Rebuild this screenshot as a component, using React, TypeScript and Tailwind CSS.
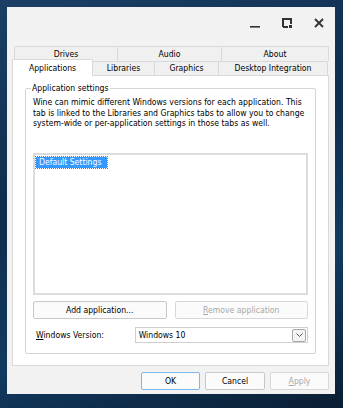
import React from 'react';

function Tab({ label, w, selected }: { label: string; w: string; selected?: boolean }) {
  if (selected) {
    return (
      <div
        className={`${w} relative z-10 -mt-[2px] h-[17px] -mb-[1px] bg-white border border-b-0 border-[#d9d9d9] rounded-t-[2px] flex items-center justify-center text-black`}
      >
        {label}
      </div>
    );
  }
  return (
    <div
      className={`${w} h-full bg-[#f0f0f0] border border-b-0 border-[#d9d9d9] -ml-px first:ml-0 rounded-t-[2px] flex items-center justify-center text-black`}
    >
      {label}
    </div>
  );
}

function TitleButtons() {
  return (
    <div className="h-[39px] flex justify-end items-start pt-[10px] pr-[11px] gap-[22px]">
      <svg width="10" height="10" viewBox="0 0 10 10" className="mt-[1px]">
        <rect x="0" y="8" width="10" height="1.6" fill="#333" />
      </svg>
      <svg width="10" height="10" viewBox="0 0 10 10" className="mt-[1px]">
        <path d="M1 9 V1 H9 V6" fill="none" stroke="#333" strokeWidth="2" />
        <path d="M1 9 H6" fill="none" stroke="#333" strokeWidth="2" />
        <rect x="7" y="7" width="3" height="3" fill="#333" />
      </svg>
      <svg width="10" height="10" viewBox="0 0 10 10" className="mt-[1px]">
        <path d="M1 1 L9 9 M9 1 L1 9" stroke="#333" strokeWidth="1.8" />
      </svg>
    </div>
  );
}

export default function App() {
  return (
    <div className="w-[343px] h-[408px] overflow-hidden bg-[linear-gradient(160deg,#1b3f66_0%,#0f2d4d_40%,#123a60_70%,#0a1e33_100%)] pt-[7px] pl-[7px] [font-family:'DejaVu_Sans_Condensed','Liberation_Sans',Arial,sans-serif] [font-stretch:condensed] text-[8.6px] text-black">
      <div className="w-[328px] h-[387px] bg-[#f2f2f2] flex flex-col">
        <TitleButtons />

        <div className="pl-[7px] pr-[6px] h-[15px] flex">
          <Tab label="Drives" w="w-[104px]" />
          <Tab label="Audio" w="w-[105px]" />
          <Tab label="About" w="w-[108px]" />
        </div>

        <div className="pl-[5px] pr-[6px] h-[14px] flex items-end">
          <Tab label="Applications" w="w-[81px]" selected />
          <Tab label="Libraries" w="w-[63px]" />
          <Tab label="Graphics" w="w-[65px]" />
          <Tab label="Desktop Integration" w="w-[110px]" />
        </div>

        <div className="mx-[5px] mr-[6px] h-[291px] bg-white border border-[#d9d9d9] px-[12px] pt-[12px]">
          <div className="relative h-[266px] border border-[#d5d5d5] rounded-[2px] px-[7px] pt-[8px]">
            <span className="absolute -top-[7px] left-[5px] bg-white px-px leading-[12px]">Application settings</span>
            <p className="leading-[10.7px] whitespace-nowrap">
              Wine can mimic different Windows versions for each application. This
              <br />
              tab is linked to the Libraries and Graphics tabs to allow you to change
              <br />
              system-wide or per-application settings in those tabs as well.
            </p>
            <div className="mt-[24px] h-[142px] border-2 border-[#dcdcdc] bg-white p-px">
              <span className="inline-block bg-[#3399ff] text-white leading-[11px] px-[3px] pr-[6px] outline outline-1 outline-dotted outline-[#777]">
                Default Settings
              </span>
            </div>
            <div className="mt-[6px] flex gap-[8px]">
              <button className="w-[134px] h-[18px] border border-[#c8c8c8] bg-[#fbfbfb] rounded-[2px] leading-none">
                Add application...
              </button>
              <button className="w-[134px] h-[18px] border border-[#d8d8d8] bg-[#fbfbfb] rounded-[2px] text-[#a8a8a8] leading-none">
                <span className="underline">R</span>emove application
              </button>
            </div>
            <div className="mt-[8px] flex items-center">
              <span className="w-[102px] pl-[3px]">
                <span className="underline">W</span>indows Version:
              </span>
              <div className="w-[174px] h-[16px] border border-[#cfcfcf] bg-white flex items-center pl-[3px] pr-px">
                <span className="flex-1">Windows 10</span>
                <div className="w-[14px] h-[13px] border border-[#a8a8a8] rounded-[2px] bg-[#f4f4f4] flex items-center justify-center">
                  <svg width="7" height="4" viewBox="0 0 7 4">
                    <path d="M0.5 0.5 L3.5 3.5 L6.5 0.5" fill="none" stroke="#555" strokeWidth="1" />
                  </svg>
                </div>
              </div>
            </div>
          </div>
        </div>

        <div className="mt-[6px] pr-[6px] flex justify-end gap-[5px]">
          <button className="w-[59px] h-[18px] border border-[#7fb7ea] bg-[#fbfbfb] rounded-[2px] leading-none">OK</button>
          <button className="w-[60px] h-[18px] border border-[#c8c8c8] bg-[#fbfbfb] rounded-[2px] leading-none">Cancel</button>
          <button className="w-[59px] h-[18px] border border-[#d8d8d8] bg-[#fbfbfb] rounded-[2px] text-[#a8a8a8] leading-none">
            <span className="underline">A</span>pply
          </button>
        </div>
      </div>
    </div>
  );
}
